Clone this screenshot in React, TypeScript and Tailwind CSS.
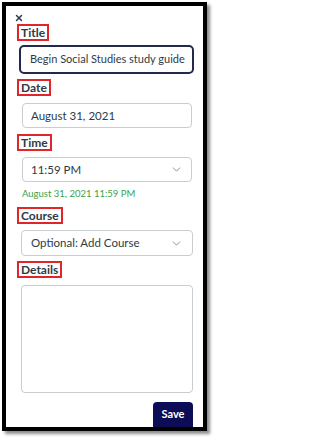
import { X, ChevronDown } from 'lucide-react';

const Label = ({ text, top }: { text: string; top: string }) => (
  <div
    className={`${top} ml-[11px] flex h-[17px] items-center self-start border-2 border-[#e0262b] px-[2px] text-[12px] leading-none font-bold text-[#2d3b45]`}
  >
    {text}
  </div>
);

export default function App() {
  return (
    <div
      className="min-h-screen bg-white pt-[2px] pl-[2px]"
      style={{ fontFamily: 'Lato, "Noto Sans", sans-serif' }}
    >
      <div className="flex h-[429px] w-[205px] flex-col border-4 border-black bg-white shadow-[3px_3px_3px_rgba(0,0,0,0.45)]">
        {/* Close */}
        <div className="mt-[7px] ml-[8px] h-[11px]">
          <X className="h-[10px] w-[10px] text-[#2d3b45]" strokeWidth={3.5} />
        </div>

        {/* Title */}
        <Label text="Title" top="mt-0" />
        <div className="mt-[4px] ml-[13px] flex h-[29px] w-[175px] items-center rounded-[5px] border-2 border-[#23284d] pl-[9px] text-[11px] text-[#2d3b45]">
          Begin Social Studies study guide
        </div>

        {/* Date */}
        <Label text="Date" top="mt-[5px]" />
        <div className="mt-[7px] ml-[16px] flex h-[25px] w-[170px] items-center rounded-[4px] border border-[#c7cdd1] pl-[8px] text-[11.5px] text-[#2d3b45]">
          August 31, 2021
        </div>

        {/* Time */}
        <Label text="Time" top="mt-[6px]" />
        <div className="mt-[6px] ml-[16px] flex h-[25px] w-[170px] items-center justify-between rounded-[4px] border border-[#c7cdd1] pr-[8px] pl-[8px] text-[11.5px] text-[#2d3b45]">
          <span>11:59 PM</span>
          <ChevronDown className="h-[13px] w-[13px] text-[#6b7780]" strokeWidth={1.5} />
        </div>
        <div className="mt-[7px] ml-[16px] h-[10px] text-[9.5px] leading-[10px] text-[#37a348]">
          August 31, 2021 11:59 PM
        </div>

        {/* Course */}
        <Label text="Course" top="mt-[8px]" />
        <div className="mt-[6px] ml-[15px] flex h-[26px] w-[172px] items-center justify-between rounded-[4px] border border-[#c7cdd1] pr-[9px] pl-[9px] text-[11.5px] text-[#2d3b45]">
          <span>Optional: Add Course</span>
          <ChevronDown className="h-[13px] w-[13px] text-[#6b7780]" strokeWidth={1.5} />
        </div>

        {/* Details */}
        <Label text="Details" top="mt-[5px]" />
        <div className="mt-[7px] ml-[15px] h-[108px] w-[172px] rounded-[4px] border border-[#c7cdd1]" />

        {/* Save */}
        <div className="mt-[9px] mr-[10px] flex h-[25px] w-[40px] items-center justify-center self-end rounded-t-[4px] bg-[#0c0c57] text-[11px] font-bold text-white">
          Save
        </div>
      </div>
    </div>
  );
}
